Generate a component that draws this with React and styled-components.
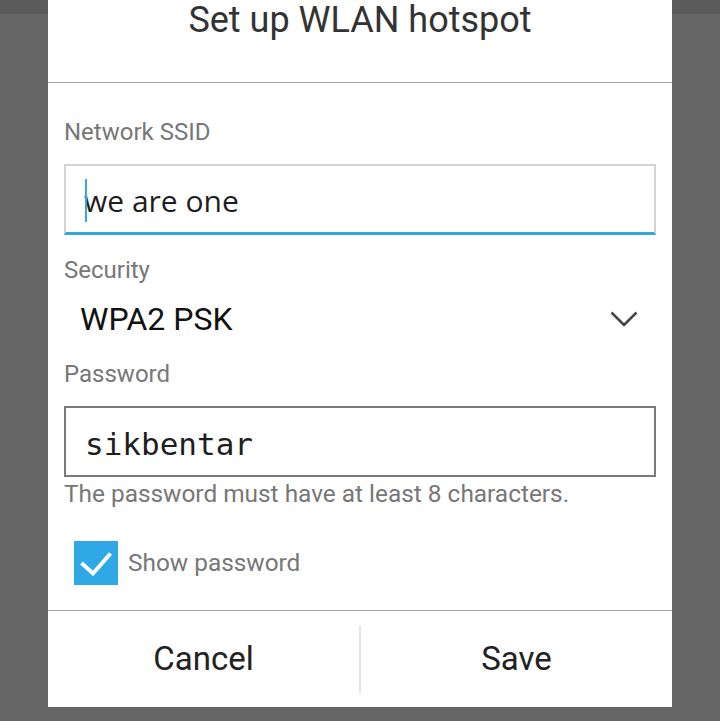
import React from "react";
import styled, { createGlobalStyle } from "styled-components";

const GlobalStyle = createGlobalStyle`
  html, body {
    margin: 0;
    padding: 0;
  }
  body {
    background: linear-gradient(#5b5b5b 0, #5b5b5b 14px, #666666 14px);
    min-height: 721px;
    font-family: Roboto, "Liberation Sans", sans-serif;
  }
`;

const Page = styled.div`
  display: flex;
  justify-content: center;
  height: 721px;
  overflow: hidden;
`;

const Dialog = styled.div`
  width: 624px;
  height: 707px;
  background: #ffffff;
  display: flex;
  flex-direction: column;
`;

const Header = styled.div`
  flex-shrink: 0;
  height: 82px;
  border-bottom: 1px solid #a6a6a6;
  text-align: center;
  font-size: 36px;
  line-height: 40px;
  color: #333333;
`;

const Body = styled.div`
  flex: 1;
  padding: 34px 16px 0;
  display: flex;
  flex-direction: column;
`;

const Label = styled.div`
  font-size: 24px;
  line-height: 30px;
  color: #777777;
  margin-top: ${p => p.$gap || 0}px;
`;

const Field = styled.div`
  position: relative;
  flex-shrink: 0;
  margin-top: 17px;
  height: ${p => (p.$mono ? 61 : 62)}px;
  border: 2px solid ${p => (p.$focused ? "#d4d4d4" : "#7a7a7a")};
  border-bottom: ${p => (p.$focused ? "3px solid #33a7de" : "2px solid #7a7a7a")};
  padding-left: ${p => (p.$mono ? 19 : 18)}px;
  padding-top: ${p => (p.$mono ? 6 : 4)}px;
  box-sizing: content-box;
  font-family: ${p =>
    p.$mono ? '"DejaVu Sans Mono", "Liberation Mono", monospace' : '"Open Sans", "DejaVu Sans", sans-serif'};
  font-size: ${p => (p.$mono ? 31 : 30)}px;
  line-height: ${p => (p.$mono ? 61 : 62)}px;
  color: #1e1e1e;
`;

const Caret = styled.span`
  position: absolute;
  left: 19px;
  top: 13px;
  width: 2px;
  height: 43px;
  background: #33a7de;
`;

const Select = styled.div`
  margin-top: 12px;
  height: 44px;
  padding: 0 18px 0 16px;
  display: flex;
  align-items: center;
  justify-content: space-between;
  font-size: 32px;
  line-height: 44px;
  color: #111111;
`;

const Helper = styled.div`
  margin-top: 2px;
  font-size: 24.4px;
  line-height: 30px;
  color: #777777;
`;

const CheckRow = styled.div`
  margin-top: 32px;
  margin-left: 10px;
  height: 44px;
  display: flex;
  align-items: center;
  gap: 10px;
  font-size: 24.4px;
  line-height: 44px;
  color: #777777;
`;

const Box = styled.div`
  width: 44px;
  height: 44px;
  background: #2fa9e6;
  display: flex;
`;

const Footer = styled.div`
  flex-shrink: 0;
  height: 96px;
  border-top: 1px solid #a6a6a6;
  display: flex;
  align-items: center;
`;

const Button = styled.div`
  flex: 1;
  height: 96px;
  text-align: center;
  font-size: 33px;
  line-height: 96px;
  color: #222222;
`;

const Separator = styled.div`
  width: 2px;
  height: 67px;
  background: #e4e4e4;
`;

const Chevron = () => (
  <svg width="28" height="16" viewBox="0 0 28 16">
    <path d="M1.5 1.5 L14 14 L26.5 1.5" fill="none" stroke="#444" strokeWidth="2.6" />
  </svg>
);

const Check = () => (
  <svg width="44" height="44" viewBox="0 0 44 44">
    <path d="M7.5 22 L19 32.5 L36.5 12.5" fill="none" stroke="#fff" strokeWidth="4" />
  </svg>
);

export default function App() {
  return (
    <Page>
      <GlobalStyle />
      <Dialog>
        <Header>Set up WLAN hotspot</Header>
        <Body>
          <Label>Network SSID</Label>
          <Field $focused>
            <Caret />
            we are one
          </Field>
          <Label $gap={20}>Security</Label>
          <Select>
            <span>WPA2 PSK</span>
            <Chevron />
          </Select>
          <Label $gap={18}>Password</Label>
          <Field $mono>sikbentar</Field>
          <Helper>The password must have at least 8 characters.</Helper>
          <CheckRow>
            <Box>
              <Check />
            </Box>
            Show password
          </CheckRow>
        </Body>
        <Footer>
          <Button>Cancel</Button>
          <Separator />
          <Button>Save</Button>
        </Footer>
      </Dialog>
    </Page>
  );
}
